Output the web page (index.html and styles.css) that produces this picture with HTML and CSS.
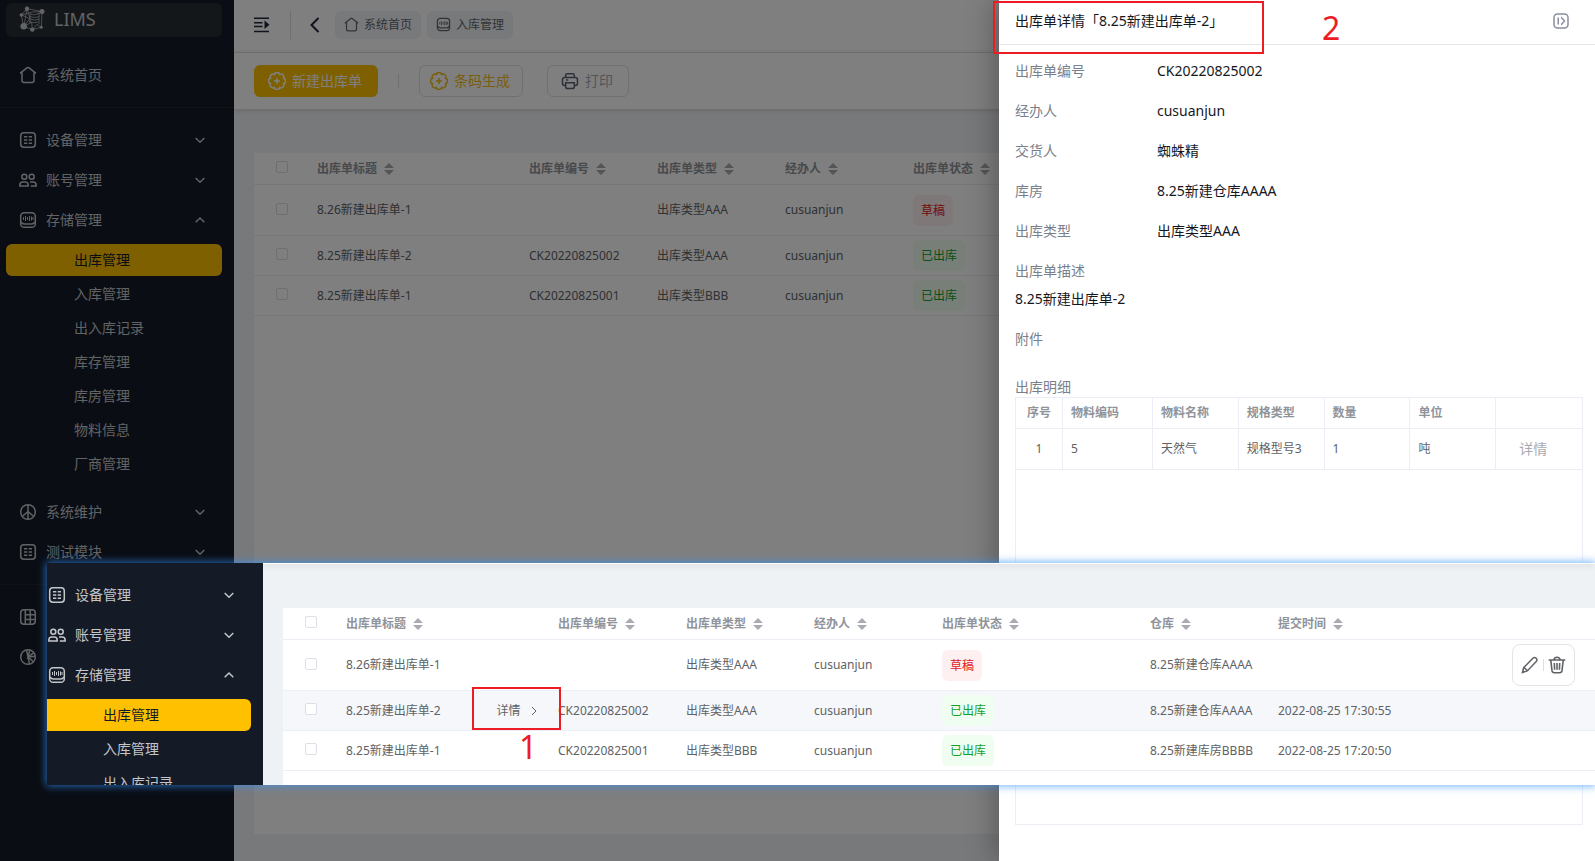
FILE: index.html
```html
<!DOCTYPE html>
<html lang="zh-CN">
<head>
<meta charset="utf-8">
<title>LIMS</title>
<link rel="stylesheet" href="styles.css">
</head>
<body>
<svg class="sprite" aria-hidden="true">
  <symbol id="home" viewBox="0 0 18 18"><path d="M1 7.4 8.2 1.7q.8-.6 1.6 0L17 7.4M3 6.4v8.2q0 1.9 1.9 1.9h8.2q1.9 0 1.9-1.9V6.4"/></symbol>
  <symbol id="list" viewBox="0 0 18 18"><rect x="1.7" y="1.7" width="14.6" height="14.6" rx="3.2"/><path d="M5 5.700h3.300M5 9h3.300M5 12.300h3.300M9.700 5.700H13M9.700 9H13M9.700 12.300H13"/></symbol>
  <symbol id="people" viewBox="0 0 18 18"><circle cx="5.3" cy="5.7" r="2.5"/><circle cx="12.7" cy="5.7" r="2.5"/><path d="M.8 15v-.8q0-3.2 3-3.2h2.4q3 0 3 3.2v.8zM11 11h3q3.2 0 3.2 3.2v.8h-5.4"/></symbol>
  <symbol id="store" viewBox="0 0 18 18"><rect x="1.7" y="1.7" width="14.6" height="14.6" rx="3.4"/><path d="M2 11q1.200 2 3.400 2h7.200q2.200 0 3.400-2"/><path stroke-width="1" d="M4.500 6v3M6.500 5v5M8.500 6v3M10.500 5v5M12.500 5.500v4M14 6v3"/></symbol>
  <symbol id="wheel" viewBox="0 0 18 18"><circle cx="9" cy="9" r="7.3"/><path d="M9 1.700v14.600M9 8.500l-5.800 5M9 8.500l5.800 5"/></symbol>
  <symbol id="grid" viewBox="0 0 18 18"><rect x="1.7" y="1.7" width="14.6" height="14.6" rx="3.2"/><path d="M6.3 2v14M11.3 2v14M6.3 6.7h10M6.3 11.5h10"/></symbol>
  <symbol id="pie" viewBox="0 0 18 18"><circle cx="9" cy="9" r="7.3"/><path d="M7.500 1.800 10.500 16.200M9 9l7.200-.8M9 9l5.500 4.800M10.800 2 9 9l5.800-4.400"/></symbol>
  <symbol id="plus" viewBox="0 0 18 18"><path d="M6.300 2.500A2.800 2.800 0 0 1 11.700 2.500A2.800 2.800 0 0 1 15.500 6.300A2.800 2.800 0 0 1 15.500 11.700A2.800 2.800 0 0 1 11.700 15.500A2.800 2.800 0 0 1 6.300 15.500A2.800 2.800 0 0 1 2.500 11.700A2.800 2.800 0 0 1 2.500 6.300A2.800 2.800 0 0 1 6.300 2.500zM9 6v6M6 9h6"/></symbol>
  <symbol id="printer" viewBox="0 0 18 18"><path d="M4.7 5.5V3.3q0-1.6 1.6-1.6h5.4q1.6 0 1.6 1.6v2.2M4.7 13.5H3.5q-2-.2-2-2V7.7q0-2.2 2.2-2.2h10.6q2.2 0 2.2 2.2v3.8q0 1.8-2 2h-1.2M4.7 10.7h8.6v4q0 1.8-1.8 1.8h-5q-1.800 0-1.800-1.800zM5 8h2.200"/></symbol>
  <symbol id="down" viewBox="0 0 12 12"><path d="M1.7 4 6 8.2 10.3 4"/></symbol>
  <symbol id="up" viewBox="0 0 12 12"><path d="M1.7 8.2 6 4l4.3 4.2"/></symbol>
  <symbol id="sort" viewBox="0 0 10 12"><path d="M0 5 5 0l5 5zM0 7l5 5 5-5z"/></symbol>
</svg>

<div class="stage">
  <div class="app">
    <aside class="sidebar">
      <div class="brand">
        <svg class="brand-mark" viewBox="0 0 26 26" aria-hidden="true">
          <path d="M8 2.7 23 5.6 22.3 21.3 13.3 23.6 4.7 20.3 2.3 9zM8 2.7 5 20M2.3 9l11-3L23 5.6M8 2.7l3 10-6.3 7.6 8-4 .6 7.3 4.700-5.300 4.300 3M11 8q4 2 10-1M11 10.500q4 2 9 .2M11 13q4 2 9 .2M10 15.500q5 2 9 .5M11 7.500V17M20 7v11M3 9l8 4"/>
          <g class="dots"><circle cx="8" cy="2.700" r="2.200"/><circle cx="23" cy="5.600" r="2.500"/><circle cx="2.300" cy="9" r="1.700"/><circle cx="4.700" cy="20.300" r="3.300"/><circle cx="13.300" cy="23.600" r="2.200"/><circle cx="22.300" cy="21.300" r="1.500"/></g>
        </svg>
        <span>LIMS</span>
      </div>
      <nav>
        <div class="group group-home"><a class="item" href="#"><svg class="ico"><use href="#home"/></svg>系统首页</a></div>
        <div class="group">
          <a class="item" href="#"><svg class="ico"><use href="#list"/></svg>设备管理<svg class="arrow"><use href="#down"/></svg></a>
          <a class="item" href="#"><svg class="ico"><use href="#people"/></svg>账号管理<svg class="arrow"><use href="#down"/></svg></a>
          <a class="item" href="#"><svg class="ico"><use href="#store"/></svg>存储管理<svg class="arrow"><use href="#up"/></svg></a>
          <div class="sub">
            <a class="active" href="#">出库管理</a>
            <a href="#">入库管理</a>
            <a href="#">出入库记录</a>
            <a href="#">库存管理</a>
            <a href="#">库房管理</a>
            <a href="#">物料信息</a>
            <a href="#">厂商管理</a>
          </div>
          <a class="item" href="#"><svg class="ico"><use href="#wheel"/></svg>系统维护<svg class="arrow"><use href="#down"/></svg></a>
          <a class="item" href="#"><svg class="ico"><use href="#list"/></svg>测试模块<svg class="arrow"><use href="#down"/></svg></a>
        </div>
        <div class="group">
          <a class="item" href="#"><svg class="ico"><use href="#grid"/></svg></a>
          <a class="item" href="#"><svg class="ico"><use href="#pie"/></svg></a>
        </div>
      </nav>
    </aside>

    <main class="main">
      <header class="topbar">
        <button class="plain" type="button"><svg class="fold" viewBox="0 0 16 16"><path d="M0 1.200h15M0 5.800h8.500M0 9.600h8.500M0 14.500h15"/><path class="fill" d="M10.500 3.500 15.500 7.700l-5 4.200z"/></svg></button>
        <span class="rule"></span>
        <button class="plain" type="button"><svg class="back" viewBox="0 0 10 16"><path d="M8.500 1 1.500 8l7 7"/></svg></button>
        <a class="tab" href="#"><svg class="ico"><use href="#home"/></svg>系统首页</a>
        <a class="tab" href="#"><svg class="ico"><use href="#store"/></svg>入库管理</a>
      </header>
      <div class="toolbar">
        <button class="btn primary" type="button"><svg class="ico"><use href="#plus"/></svg>新建出库单</button>
        <span class="rule"></span>
        <button class="btn accent" type="button"><svg class="ico"><use href="#plus"/></svg>条码生成</button>
        <button class="btn print" type="button"><svg class="ico"><use href="#printer"/></svg>打印</button>
      </div>
      <div class="content">
        <div class="panel">
          <table class="orders">
            <colgroup><col class="c-check"><col class="c-title"><col class="c-std"><col class="c-std"><col class="c-std"><col></colgroup>
            <thead><tr>
              <th><input type="checkbox" aria-label="全选"></th>
              <th>出库单标题<svg class="sort"><use href="#sort"/></svg></th>
              <th>出库单编号<svg class="sort"><use href="#sort"/></svg></th>
              <th>出库单类型<svg class="sort"><use href="#sort"/></svg></th>
              <th>经办人<svg class="sort"><use href="#sort"/></svg></th>
              <th>出库单状态<svg class="sort"><use href="#sort"/></svg></th>
            </tr></thead>
            <tbody>
              <tr class="tall"><td><input type="checkbox" aria-label="8.26新建出库单-1"></td><td>8.26新建出库单-1</td><td></td><td>出库类型AAA</td><td>cusuanjun</td><td><span class="tag draft">草稿</span></td></tr>
              <tr><td><input type="checkbox" aria-label="8.25新建出库单-2"></td><td>8.25新建出库单-2</td><td>CK20220825002</td><td>出库类型AAA</td><td>cusuanjun</td><td><span class="tag done">已出库</span></td></tr>
              <tr><td><input type="checkbox" aria-label="8.25新建出库单-1"></td><td>8.25新建出库单-1</td><td>CK20220825001</td><td>出库类型BBB</td><td>cusuanjun</td><td><span class="tag done">已出库</span></td></tr>
            </tbody>
          </table>
        </div>
      </div>
    </main>
  </div>

  <div class="mask"></div>

  <section class="drawer">
    <header class="drawer-head">
      <h2>出库单详情「8.25新建出库单-2」</h2>
      <button class="plain" type="button"><svg class="close" viewBox="0 0 16 16"><rect x="1" y="1" width="14" height="14" rx="3.500"/><path d="M5.200 4.500v7M8 4.500h.3L11.500 8l-3.200 3.500H8"/></svg></button>
    </header>
    <div class="drawer-body">
      <dl class="facts">
        <div><dt>出库单编号</dt><dd>CK20220825002</dd></div>
        <div><dt>经办人</dt><dd>cusuanjun</dd></div>
        <div><dt>交货人</dt><dd>蜘蛛精</dd></div>
        <div><dt>库房</dt><dd>8.25新建仓库AAAA</dd></div>
        <div><dt>出库类型</dt><dd>出库类型AAA</dd></div>
        <div class="stacked"><dt>出库单描述</dt><dd>8.25新建出库单-2</dd></div>
        <div><dt>附件</dt><dd></dd></div>
      </dl>
      <h3>出库明细</h3>
      <div class="lines">
        <table>
          <colgroup><col class="l-no"><col class="l-code"><col><col><col><col><col></colgroup>
          <thead><tr><th>序号</th><th>物料编码</th><th>物料名称</th><th>规格类型</th><th>数量</th><th>单位</th><th></th></tr></thead>
          <tbody><tr><td>1</td><td>5</td><td>天然气</td><td>规格型号3</td><td>1</td><td>吨</td><td class="more"><a href="#">详情</a></td></tr></tbody>
        </table>
      </div>
    </div>
  </section>

  <div class="inset">
    <aside class="inset-side">
      <a class="item" href="#"><svg class="ico"><use href="#list"/></svg>设备管理<svg class="arrow"><use href="#down"/></svg></a>
      <a class="item" href="#"><svg class="ico"><use href="#people"/></svg>账号管理<svg class="arrow"><use href="#down"/></svg></a>
      <a class="item" href="#"><svg class="ico"><use href="#store"/></svg>存储管理<svg class="arrow"><use href="#up"/></svg></a>
      <div class="sub">
        <a class="active" href="#">出库管理</a>
        <a href="#">入库管理</a>
        <a href="#">出入库记录</a>
      </div>
    </aside>
    <div class="inset-main">
      <div class="strip"></div>
      <div class="panel">
        <table class="orders">
          <colgroup><col class="c-check"><col class="c-title"><col class="c-std"><col class="c-std"><col class="c-std"><col class="c-state"><col class="c-std"><col></colgroup>
          <thead><tr>
            <th><input type="checkbox" aria-label="全选"></th>
            <th>出库单标题<svg class="sort"><use href="#sort"/></svg></th>
            <th>出库单编号<svg class="sort"><use href="#sort"/></svg></th>
            <th>出库单类型<svg class="sort"><use href="#sort"/></svg></th>
            <th>经办人<svg class="sort"><use href="#sort"/></svg></th>
            <th>出库单状态<svg class="sort"><use href="#sort"/></svg></th>
            <th>仓库<svg class="sort"><use href="#sort"/></svg></th>
            <th>提交时间<svg class="sort"><use href="#sort"/></svg></th>
          </tr></thead>
          <tbody>
            <tr class="tall"><td><input type="checkbox" aria-label="8.26新建出库单-1"></td><td>8.26新建出库单-1</td><td></td><td>出库类型AAA</td><td>cusuanjun</td><td><span class="tag draft">草稿</span></td><td>8.25新建仓库AAAA</td>
              <td><div class="actions">
                <button class="plain" type="button"><svg viewBox="0 0 18 18"><path d="M1.500 16.500 2.600 11.600 11.900 2.300q1.700-1.500 3.300 0 1.500 1.600 0 3.300L6.300 14.900zM3 11.500l3.500 3.300M2 15l1.300 1.200"/></svg></button>
                <span class="rule"></span>
                <button class="plain" type="button"><svg class="bin" viewBox="0 0 18 18"><path d="M.7 4h16.600M5.800 3.700Q6.500 1.200 9 1.200t3.200 2.500M2.800 4.300 4 14.700q.3 2 2.200 2h5.600q1.900 0 2.200-2L15.200 4.300M6.300 7l.3 6.700M9 7v6.700M11.700 7l-.3 6.700"/></svg></button>
              </div></td></tr>
            <tr class="hover"><td><input type="checkbox" aria-label="8.25新建出库单-2"></td><td><div class="title-cell"><span>8.25新建出库单-2</span><a href="#">详情<svg class="next" viewBox="0 0 6 10"><path d="M1 1l4 4-4 4"/></svg></a></div></td><td>CK20220825002</td><td>出库类型AAA</td><td>cusuanjun</td><td><span class="tag done">已出库</span></td><td>8.25新建仓库AAAA</td><td>2022-08-25 17:30:55</td></tr>
            <tr><td><input type="checkbox" aria-label="8.25新建出库单-1"></td><td>8.25新建出库单-1</td><td>CK20220825001</td><td>出库类型BBB</td><td>cusuanjun</td><td><span class="tag done">已出库</span></td><td>8.25新建库房BBBB</td><td>2022-08-25 17:20:50</td></tr>
          </tbody>
        </table>
      </div>
    </div>
  </div>

  <div class="mark mark-one"></div>
  <span class="num num-one">1</span>
  <div class="mark mark-two"></div>
  <span class="num num-two">2</span>
</div>
</body>
</html>
```
FILE: styles.css
```css
* { box-sizing: border-box; }

body {
  margin: 0;
  font-family: "Noto Sans", "Noto Sans CJK SC", sans-serif;
  font-size: 14px;
  line-height: 20px;
  color: #16181d;
}

a { color: inherit; text-decoration: none; }
svg { flex: none; fill: none; stroke: currentColor; stroke-width: 1.5; }
.sprite { display: none; }
.ico { width: 18px; height: 18px; }

button { font: inherit; cursor: pointer; }
.plain { display: flex; padding: 0; border: 0; background: none; color: inherit; }

.stage { position: relative; min-height: 100vh; overflow: hidden; }
.app { display: flex; min-height: 100vh; }
.mask { position: absolute; inset: 0; background: rgba(0, 0, 0, .5); }

/* Sidebar */
.sidebar { width: 234px; flex: none; background: #151b26; color: #c3c6cb; }
.brand {
  display: flex;
  align-items: center;
  gap: 9px;
  height: 34px;
  margin: 3px 12px 0 6px;
  padding: 0 0 2px 13px;
  border-radius: 6px;
  background: #292e35;
  font-size: 18px;
}
.brand-mark { width: 26px; height: 26px; stroke-width: .7; }
.dots { fill: currentColor; stroke: none; }
.group { padding: 12px 0; border-bottom: 1px solid #20252d; }
.group:last-child { border-bottom: 0; }
.group-home { padding: 18px 0 12px; }
.item {
  display: flex;
  align-items: center;
  gap: 9px;
  height: 40px;
  padding: 0 28px 0 19px;
}
.arrow { width: 12px; height: 12px; margin-left: auto; }
.sub { display: flex; flex-direction: column; gap: 2px; padding: 4px 12px 12px 6px; }
.sub a { height: 32px; padding-left: 68px; border-radius: 6px; line-height: 32px; }
.sub .active { background: #ffc000; color: #151b26; }

/* Header and toolbar */
.main { display: flex; flex: 1; flex-direction: column; min-width: 0; background: #f0f3f6; }
.topbar {
  display: flex;
  align-items: center;
  height: 53px;
  padding: 0 20px 3px;
  border-bottom: 1px solid #e4e7ed;
  background: #fff;
  color: #20243a;
}
.fold { width: 16px; height: 16px; }
.fold .fill { fill: currentColor; stroke: none; }
.back { width: 10px; height: 16px; stroke-width: 2; }
.topbar .rule { width: 1px; height: 28px; margin: 0 19px 0 20px; background: #dcdfe6; }
.tab {
  display: flex;
  align-items: center;
  gap: 5px;
  height: 28px;
  margin-left: 6px;
  padding: 0 9px;
  border-radius: 6px;
  background: #f0f2f5;
  color: #62666e;
  font-size: 12px;
}
.plain + .tab { margin-left: 15px; }
.tab .ico { width: 15px; height: 15px; }
.toolbar {
  display: flex;
  align-items: center;
  height: 56px;
  padding: 0 20px;
  background: #fff;
  box-shadow: 0 1px 6px rgba(0, 0, 0, .16);
}
.toolbar .rule { width: 1px; height: 14px; margin: 0 20px; background: #dcdfe6; }
.btn {
  display: flex;
  align-items: center;
  gap: 6px;
  height: 32px;
  padding: 0 12px 0 10px;
  border: 1px solid #dcdfe6;
  border-radius: 6px;
  background: #fff;
}
.primary { padding: 0 15px 0 13px; border-color: #ffc000; background: #ffc000; color: #fff; }
.accent { color: #f2bd18; }
.print { margin-left: 24px; padding: 0 15px 0 13px; color: #a8abb2; }
.print .ico { color: #5d6274; }

/* Orders table */
.content { display: flex; flex: 1; padding: 44px 20px 27px; }
.panel { flex: 1; background: #fff; }
table { width: 100%; border-spacing: 0; table-layout: fixed; font-size: 12px; color: #606266; }
th { color: #909399; font-weight: 700; text-align: left; }
.c-check { width: 51px; }
.c-title { width: 212px; }
.c-std { width: 128px; }
.c-state { width: 208px; }
.orders th, .orders td {
  height: 40px;
  padding: 0 12px;
  border-bottom: 1px solid #ebeef5;
  white-space: nowrap;
}
.orders th { height: 32px; }
.orders .tall td { height: 51px; }
.orders .hover { background: #f5f7fa; }
.orders th:first-child, .orders td:first-child { padding: 0 0 3px 22px; }
.sort { width: 10px; height: 12px; margin-left: 7px; fill: #a8abb2; stroke: none; vertical-align: -2px; }
input[type="checkbox"] {
  appearance: none;
  display: block;
  width: 12px;
  height: 12px;
  margin: 0;
  border: 1px solid #dcdfe6;
  border-radius: 2px;
  background: #fff;
}
.tag { display: inline-block; height: 31px; padding: 0 8px; border-radius: 6px; line-height: 31px; vertical-align: middle; }
.draft { background: #fef0f0; color: #e02020; }
.done { background: #f0fdf1; color: #12a02c; }
.title-cell { display: flex; gap: 56px; }
.title-cell a { display: flex; align-items: center; gap: 10px; }
.next { width: 6px; height: 10px; stroke-width: 1; }
.actions {
  display: flex;
  align-items: center;
  gap: 4px;
  width: 63px;
  height: 42px;
  margin: 0 8px 0 auto;
  padding: 0 8px;
  border: 1px solid #e4e4e7;
  border-radius: 8px;
}
.actions svg { width: 18px; height: 18px; }
.actions .bin { stroke-width: 1.6; }
.actions .rule { width: 1px; height: 12px; flex: none; background: #dcdfe6; }

/* Detail drawer */
.drawer {
  position: absolute;
  inset: 0 0 0 auto;
  display: flex;
  flex-direction: column;
  width: 596px;
  background: #fff;
  box-shadow: -4px 0 28px rgba(0, 0, 0, .3);
}
.drawer-head {
  display: flex;
  align-items: center;
  justify-content: space-between;
  height: 45px;
  padding: 0 26px 2px 16px;
  border-bottom: 1px solid #e6e6e8;
}
.close { width: 16px; height: 16px; color: #8a8f9e; }
h2, h3 { margin: 0; font-size: 14px; font-weight: 400; }
h3 { margin-top: 18px; color: #7a7f8c; }
.drawer-body { display: flex; flex: 1; flex-direction: column; padding: 6px 12px 36px 16px; }
.facts { margin: 0; }
.facts div { display: flex; height: 40px; line-height: 40px; }
.facts dt { width: 142px; color: #7a7f8c; }
.facts dd { margin: 0; }
.facts .stacked { display: block; height: 68px; }
.facts .stacked dd { line-height: 16px; }
.lines { flex: 1; border: 1px solid #ebeef5; }
.lines th, .lines td { height: 41px; padding: 0 8px; border: solid #ebeef5; border-width: 0 1px 1px 0; }
.lines th { height: 31px; }
.lines th:last-child, .lines td:last-child { border-right: 0; }
.lines th:first-child, .lines td:first-child { text-align: center; }
.l-no { width: 47px; }
.l-code { width: 90px; }
.lines .more { padding-left: 23px; color: #a8abb2; font-size: 14px; }

/* Floating close-up of the list */
.inset {
  position: absolute;
  top: 563px;
  right: 0;
  left: 47px;
  display: flex;
  height: 222px;
  overflow: hidden;
  box-shadow: 0 0 8px 1px rgba(50, 145, 255, .7);
}
.inset-side { width: 216px; flex: none; padding-top: 12px; background: #151b26; color: #c3c6cb; }
.inset-side .item { padding-left: 1px; }
.inset-side .sub { padding-left: 0; }
.inset-side .sub a { padding-left: 56px; border-radius: 0 6px 6px 0; }
.inset-main { display: flex; flex: 1; flex-direction: column; min-width: 0; padding-left: 20px; background: #eef2f5; }
.strip { height: 1px; margin: 0 0 44px -20px; background: #fff; box-shadow: 0 1px 6px rgba(0, 0, 0, .3); }

/* Annotations */
.mark { position: absolute; border: 2px solid #ed1c24; }
.mark-one { top: 687px; left: 472px; width: 89px; height: 43px; }
.mark-two { top: 1px; left: 993px; width: 271px; height: 53px; }
.num { position: absolute; color: #ed1c24; font-size: 32px; line-height: 32px; }
.num-one { top: 731px; left: 519px; }
.num-two { top: 12px; left: 1322px; }
```
